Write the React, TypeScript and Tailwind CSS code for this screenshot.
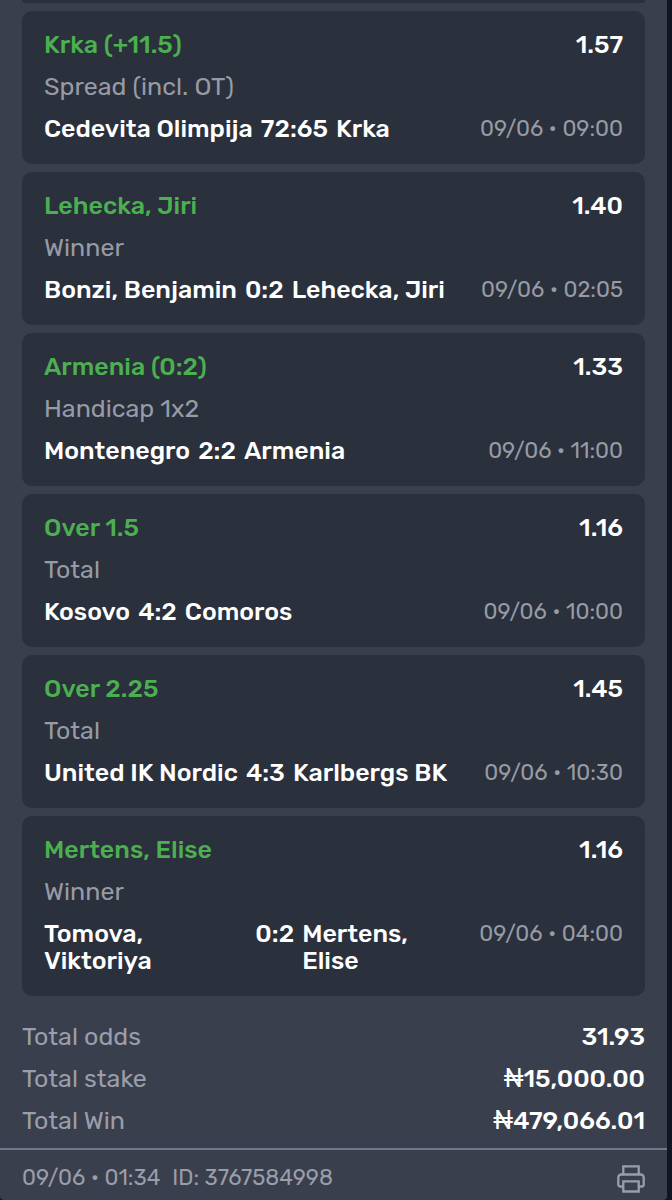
const FONT = "font-['Rubik','Roboto','Noto_Sans',sans-serif]"

const BETS = [
  { pick: 'Krka (+11.5)', market: 'Spread (incl. OT)', home: 'Cedevita Olimpija', score: '72:65', away: 'Krka', date: '09/06 • 09:00', odds: '1.57' },
  { pick: 'Lehecka, Jiri', market: 'Winner', home: 'Bonzi, Benjamin', score: '0:2', away: 'Lehecka, Jiri', date: '09/06 • 02:05', odds: '1.40' },
  { pick: 'Armenia (0:2)', market: 'Handicap 1x2', home: 'Montenegro', score: '2:2', away: 'Armenia', date: '09/06 • 11:00', odds: '1.33' },
  { pick: 'Over 1.5', market: 'Total', home: 'Kosovo', score: '4:2', away: 'Comoros', date: '09/06 • 10:00', odds: '1.16' },
  { pick: 'Over 2.25', market: 'Total', home: 'United IK Nordic', score: '4:3', away: 'Karlbergs BK', date: '09/06 • 10:30', odds: '1.45' },
  { pick: 'Mertens, Elise', market: 'Winner', home: 'Tomova, Viktoriya', score: '0:2', away: 'Mertens, Elise', date: '09/06 • 04:00', odds: '1.16' },
]

const TOTALS = [
  { label: 'Total odds', currency: '', value: '31.93' },
  { label: 'Total stake', currency: '₦', value: '15,000.00' },
  { label: 'Total Win', currency: '₦', value: '479,066.01' },
]

function PrinterIcon() {
  return (
    <svg width="28" height="28" viewBox="0 0 28 28" fill="none" stroke="currentColor" strokeWidth="2.3">
      <path d="M6.300 10V1.300h15.400V10" />
      <path d="M6 21.500H3.300a2 2 0 0 1-2-2V12.500a3 3 0 0 1 3-3h19.400a3 3 0 0 1 3 3v7a2 2 0 0 1-2 2H22" />
      <path d="M6.300 16.300h15.400v10.200H6.300z" />
    </svg>
  )
}

function BetCard({ bet }: { bet: (typeof BETS)[number] }) {
  return (
    <li className="flex flex-col gap-[15px] rounded-[10px] bg-[#2a303c] px-[22px] pt-5 pb-[22px]">
      <div className="flex justify-between">
        <span className="font-medium text-[#4caf50]">{bet.pick}</span>
        <span className="font-medium">{bet.odds}</span>
      </div>
      <div className="text-[#979ba5]">{bet.market}</div>
      <div className="flex items-start justify-between gap-4">
        <div className="flex gap-2 font-medium">
          <span>{bet.home}</span>
          <span className="shrink-0">{bet.score}</span>
          <span>{bet.away}</span>
        </div>
        <time className="shrink-0 whitespace-nowrap text-[22px] text-[#979ba5]">{bet.date}</time>
      </div>
    </li>
  )
}

export default function App() {
  return (
    <div className={`bg-[#0f1822] pr-[5px] text-[25px] leading-[27px] text-white ${FONT}`}>
      <main className="rounded-b-sm bg-[#3a3f4e]">
        {/* Tail of the card scrolled off above */}
        <div className="mx-[22px] h-[3px] rounded-b-[10px] bg-[#2a303c]" />
        <ul className="flex flex-col gap-2 px-[22px] pt-2">
          {BETS.map((bet) => (
            <BetCard key={bet.pick} bet={bet} />
          ))}
        </ul>

        <dl className="flex flex-col gap-[15px] px-[22px] pt-[27px] pb-3.5">
          {TOTALS.map((t) => (
            <div key={t.label} className="flex justify-between">
              <dt className="text-[#9a9ea8]">{t.label}</dt>
              <dd className="font-medium">
                <span className="font-normal">{t.currency}</span>
                {t.value}
              </dd>
            </div>
          ))}
        </dl>

        <footer className="flex items-center border-t-2 border-[#73778a] px-[22px] pt-[11px] pb-[7px] text-[22px] text-[#9a9ea8]">
          <span>09/06 • 01:34</span>
          <span className="ml-3">ID: 3767584998</span>
          <button type="button" aria-label="Print ticket" className="ml-auto pt-1">
            <PrinterIcon />
          </button>
        </footer>
      </main>
    </div>
  )
}
